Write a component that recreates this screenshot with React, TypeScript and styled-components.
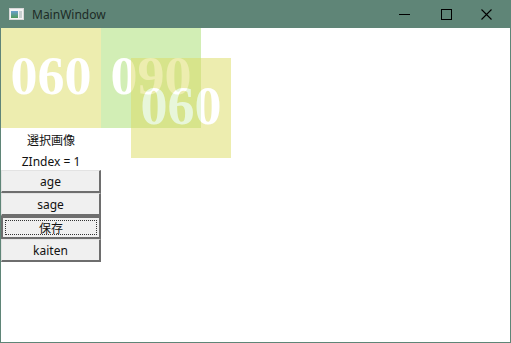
import React from "react";
import styled, { createGlobalStyle } from "styled-components";

const Global = createGlobalStyle`
  html, body { margin: 0; padding: 0; background: #5f8577; }
  * { box-sizing: border-box; }
`;

const Frame = styled.div`
  width: 511px;
  height: 343px;
  background: #5f8577;
  display: flex;
  flex-direction: column;
  padding: 0 1px 1px 1px;
  font-family: "Noto Sans", "Noto Sans CJK JP", sans-serif;
`;

const TitleBar = styled.div`
  height: 28px;
  display: flex;
  align-items: center;
  flex-shrink: 0;
`;

const AppIcon = styled.svg`
  margin-left: 8px;
  margin-right: 8px;
`;

const Title = styled.span`
  font-size: 12px;
  color: #1d2b26;
  flex: 1;
  padding-top: 1px;
`;

const CaptionButton = styled.div`
  width: 39px;
  height: 28px;
  display: flex;
  align-items: center;
  justify-content: center;
`;

const Client = styled.div`
  flex: 1;
  background: #ffffff;
  position: relative;
  display: flex;
  flex-direction: column;
`;

const TileRow = styled.div`
  display: flex;
`;

const Tile = styled.div<{ $bg: string }>`
  width: 100px;
  height: 100px;
  background: ${(p) => p.$bg};
  opacity: 0.5;
  display: flex;
  align-items: center;
  justify-content: center;
  color: #ffffff;
  font-family: "Liberation Serif", serif;
  font-weight: bold;
  font-size: 54px;
  letter-spacing: 0px;
  padding-bottom: 5px;
`;

const Overlay = styled(Tile)`
  position: absolute;
  left: 130px;
  top: 30px;
`;

const Side = styled.div`
  width: 100px;
  display: flex;
  flex-direction: column;
`;

const Caption = styled.div<{ $h: number }>`
  height: ${(p) => p.$h}px;
  line-height: ${(p) => p.$h}px;
  text-align: center;
  font-size: 12px;
  color: #111;
`;

const Button = styled.div<{ $focused?: boolean }>`
  height: 23px;
  background: #f0f0f0;
  display: flex;
  align-items: center;
  justify-content: center;
  font-size: 12px;
  color: #111;
  position: relative;
  border-style: solid;
  border-width: 1px 2px 2px 1px;
  border-color: #e3e3e3 #6e6e6e #6e6e6e #e3e3e3;
  ${(p) =>
    p.$focused &&
    `
    border-width: 2px;
    border-color: #6e6e6e;
    &::after {
      content: "";
      position: absolute;
      left: 2px; right: 2px; top: 2px; bottom: 2px;
      border: 1px dotted #333;
    }
  `}
`;

export default function App() {
  return (
    <>
      <Global />
      <Frame>
        <TitleBar>
          <AppIcon width="15" height="12" viewBox="0 0 15 12">
            <rect x="0.5" y="0.5" width="14" height="11" fill="#f4f4f4" stroke="#d8d8d8" />
            <defs>
              <linearGradient id="g" x1="0" y1="0" x2="0" y2="1">
                <stop offset="0" stopColor="#6a9fd0" />
                <stop offset="1" stopColor="#4f9a5a" />
              </linearGradient>
            </defs>
            <rect x="2" y="3" width="7" height="7" fill="url(#g)" />
            <rect x="10" y="3" width="3" height="7" fill="#c8d0d0" />
          </AppIcon>
          <Title>MainWindow</Title>
          <CaptionButton style={{ width: 45 }}>
            <svg width="11" height="11" viewBox="0 0 11 11">
              <line x1="0" y1="5.5" x2="11" y2="5.5" stroke="#000" strokeWidth="1" />
            </svg>
          </CaptionButton>
          <CaptionButton>
            <svg width="11" height="11" viewBox="0 0 11 11">
              <rect x="0.5" y="0.5" width="10" height="10" fill="none" stroke="#000" strokeWidth="1" />
            </svg>
          </CaptionButton>
          <CaptionButton style={{ width: 40 }}>
            <svg width="11" height="11" viewBox="0 0 11 11">
              <path d="M0.5 0.5 L10.5 10.5 M10.5 0.5 L0.5 10.5" stroke="#000" strokeWidth="1.1" />
            </svg>
          </CaptionButton>
          <div style={{ width: 4 }} />
        </TitleBar>
        <Client>
          <TileRow>
            <Tile $bg="rgb(220,220,98)">060</Tile>
            <Tile $bg="rgb(167,223,109)">090</Tile>
          </TileRow>
          <Overlay $bg="rgb(220,220,98)">060</Overlay>
          <Side>
            <Caption $h={26}>選択画像</Caption>
            <Caption $h={16}>ZIndex = 1</Caption>
            <Button>age</Button>
            <Button>sage</Button>
            <Button $focused>保存</Button>
            <Button>kaiten</Button>
          </Side>
        </Client>
      </Frame>
    </>
  );
}
